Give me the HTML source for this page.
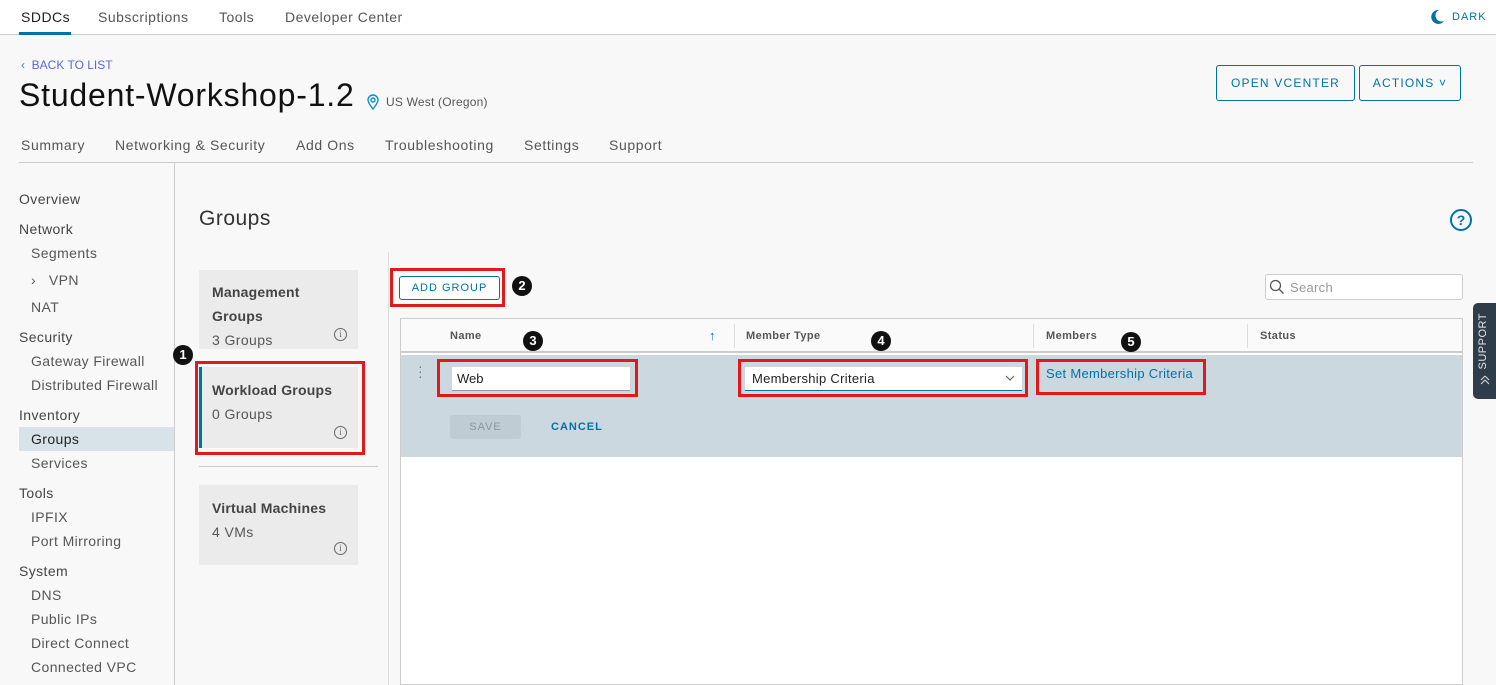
<!DOCTYPE html>
<html><head><meta charset="utf-8"><style>
*{box-sizing:border-box;margin:0;padding:0}
body{width:1496px;height:685px;overflow:hidden;background:#f8f8f8;font-family:"Liberation Sans",sans-serif;color:#333;position:relative}
.a{position:absolute;white-space:nowrap}
.top{position:absolute;left:0;top:0;width:1496px;height:35px;background:#fff;border-bottom:1px solid #ccc}
.t{font-size:14px;color:#565656;top:9px;letter-spacing:.5px}
.nav{font-size:14px;color:#565656;top:137px;letter-spacing:.6px}
.side{font-size:14px;color:#444;letter-spacing:.4px}
.sub{font-size:14px;color:#565656;letter-spacing:.4px}
.card{position:absolute;left:199px;width:159px;background:#ebebeb}
.card b{position:absolute;left:13px;font-size:14px;color:#444;letter-spacing:.2px}
.card span{position:absolute;left:13px;font-size:14px;color:#565656;letter-spacing:.4px}
.info{position:absolute;width:13px;height:13px;border:1px solid #666;border-radius:50%;font-size:9px;text-align:center;line-height:11px;color:#666;font-family:"Liberation Serif",serif}
.red{position:absolute;border:3px solid #e0191b}
.num{position:absolute;width:20px;height:20px;border-radius:50%;background:#111;color:#fff;font-size:13px;font-weight:bold;text-align:center;line-height:20px}
.th{font-size:11px;font-weight:bold;color:#555;top:330px;letter-spacing:.4px}
.sep{position:absolute;top:324px;width:1px;height:24px;background:#ddd}
</style></head><body>
<div class="top"></div>
<div class="a t" style="left:21px;color:#222">SDDCs</div>
<div class="a" style="left:19px;top:32px;width:52px;height:3px;background:#0072a3"></div>
<div class="a t" style="left:98px">Subscriptions</div>
<div class="a t" style="left:219px">Tools</div>
<div class="a t" style="left:285px">Developer Center</div>
<svg class="a" style="left:1430px;top:9px" width="15" height="16" viewBox="0 0 15 16"><path d="M9 1a7 7 0 1 0 5 11A6 6 0 0 1 9 1z" fill="#0072a3"/></svg>
<div class="a" style="left:1452px;top:11px;font-size:11px;color:#0072a3;letter-spacing:1px">DARK</div>

<div class="a" style="left:21px;top:58px;font-size:12px;color:#5a6ad0">‹&nbsp; BACK TO LIST</div>
<div class="a" style="left:19px;top:77px;font-size:32px;color:#111;letter-spacing:.8px">Student-Workshop-1.2</div>
<svg class="a" style="left:366px;top:94px" width="14" height="16" viewBox="0 0 14 16"><path d="M7 15C3 10 2 8 2 6a5 5 0 0 1 10 0c0 2-1 4-5 9z" fill="none" stroke="#0a8fd0" stroke-width="1.4"/><circle cx="7" cy="6" r="2" fill="none" stroke="#0a8fd0" stroke-width="1.4"/></svg>
<div class="a" style="left:386px;top:95px;font-size:12px;color:#565656;letter-spacing:.2px">US West (Oregon)</div>
<div class="a" style="left:1216px;top:65px;width:139px;height:36px;border:1px solid #0072a3;border-radius:3px;color:#0072a3;font-size:12px;letter-spacing:1.2px;text-align:center;line-height:34px">OPEN VCENTER</div>
<div class="a" style="left:1359px;top:65px;width:102px;height:36px;border:1px solid #0072a3;border-radius:3px;color:#0072a3;font-size:12px;letter-spacing:1.2px;text-align:center;line-height:34px">ACTIONS ˅</div>

<div class="a nav" style="left:21px">Summary</div>
<div class="a nav" style="left:115px">Networking &amp; Security</div>
<div class="a nav" style="left:296px">Add Ons</div>
<div class="a nav" style="left:385px">Troubleshooting</div>
<div class="a nav" style="left:524px">Settings</div>
<div class="a nav" style="left:609px">Support</div>
<div class="a" style="left:19px;top:162px;width:1454px;height:1px;background:#ccc"></div>
<div class="a" style="left:174px;top:163px;width:1px;height:522px;background:#ccc"></div>

<div class="a side" style="left:19px;top:191px">Overview</div>
<div class="a side" style="left:19px;top:221px">Network</div>
<div class="a sub" style="left:31px;top:245px">Segments</div>
<div class="a sub" style="left:31px;top:272px">›&nbsp;&nbsp; VPN</div>
<div class="a sub" style="left:31px;top:299px">NAT</div>
<div class="a side" style="left:19px;top:329px">Security</div>
<div class="a sub" style="left:31px;top:353px">Gateway Firewall</div>
<div class="a sub" style="left:31px;top:377px">Distributed Firewall</div>
<div class="a side" style="left:19px;top:407px">Inventory</div>
<div class="a" style="left:19px;top:427px;width:155px;height:24px;background:#d8e3e9"></div>
<div class="a sub" style="left:31px;top:431px;color:#222">Groups</div>
<div class="a sub" style="left:31px;top:455px">Services</div>
<div class="a side" style="left:19px;top:485px">Tools</div>
<div class="a sub" style="left:31px;top:509px">IPFIX</div>
<div class="a sub" style="left:31px;top:533px">Port Mirroring</div>
<div class="a side" style="left:19px;top:563px">System</div>
<div class="a sub" style="left:31px;top:587px">DNS</div>
<div class="a sub" style="left:31px;top:611px">Public IPs</div>
<div class="a sub" style="left:31px;top:635px">Direct Connect</div>
<div class="a sub" style="left:31px;top:659px">Connected VPC</div>

<div class="a" style="left:199px;top:207px;font-size:21px;color:#333;letter-spacing:.5px">Groups</div>
<div class="a" style="left:1450px;top:209px;width:22px;height:22px;border:2px solid #0072a3;border-radius:50%;color:#0072a3;font-size:14px;text-align:center;line-height:18px;font-weight:bold">?</div>

<div class="card" style="top:270px;height:79px"><b style="top:10px;line-height:24px">Management<br>Groups</b><span style="top:62px">3 Groups</span><div class="info" style="left:135px;top:58px">i</div></div>
<div class="card" style="top:367px;height:81px;border-left:3px solid #0072a3"><b style="top:15px;left:10px">Workload Groups</b><span style="top:39px;left:10px">0 Groups</span><div class="info" style="left:132px;top:59px">i</div></div>
<div class="a" style="left:199px;top:466px;width:179px;height:1px;background:#ccc"></div>
<div class="card" style="top:485px;height:80px"><b style="top:15px">Virtual Machines</b><span style="top:39px">4 VMs</span><div class="info" style="left:135px;top:57px">i</div></div>
<div class="red" style="left:195px;top:361px;width:170px;height:94px"></div>
<div class="num" style="left:173px;top:345px">1</div>

<div class="a" style="left:388px;top:252px;width:1px;height:433px;background:#ddd"></div>
<div class="a" style="left:399px;top:276px;width:101px;height:24px;border:1px solid #0072a3;border-radius:3px;color:#0072a3;font-size:11px;letter-spacing:1px;text-align:center;line-height:22px;background:#fff">ADD GROUP</div>
<div class="red" style="left:390px;top:268px;width:115px;height:39px"></div>
<div class="num" style="left:512px;top:276px">2</div>

<div class="a" style="left:1265px;top:274px;width:198px;height:26px;border:1px solid #ccc;border-radius:3px;background:#fff"></div>
<svg class="a" style="left:1269px;top:279px" width="16" height="16" viewBox="0 0 16 16"><circle cx="6.5" cy="6.5" r="5" fill="none" stroke="#555" stroke-width="1.3"/><path d="M10 10l4.5 4.5" stroke="#555" stroke-width="1.3"/></svg>
<div class="a" style="left:1290px;top:280px;font-size:13px;color:#999;letter-spacing:.3px">Search</div>

<div class="a" style="left:400px;top:318px;width:1063px;height:367px;background:#fff;border:1px solid #ccc"></div>
<div class="a" style="left:401px;top:319px;width:1061px;height:34px;background:#fafafa;border-bottom:2px solid #ccc"></div>
<div class="a th" style="left:450px">Name</div>
<div class="a" style="left:709px;top:328px;color:#0072a3;font-size:13px">↑</div>
<div class="sep" style="left:734px"></div>
<div class="a th" style="left:746px">Member Type</div>
<div class="sep" style="left:1033px"></div>
<div class="a th" style="left:1046px">Members</div>
<div class="sep" style="left:1247px"></div>
<div class="a th" style="left:1260px">Status</div>

<div class="a" style="left:401px;top:355px;width:1061px;height:102px;background:#cbd8e0"></div>
<div class="a" style="left:418px;top:364px;color:#777;font-size:14px;line-height:5px">·<br>·<br>·</div>
<div class="a" style="left:452px;top:367px;width:178px;height:24px;background:#fff;border-bottom:1px solid #999"></div>
<div class="a" style="left:457px;top:371px;font-size:13px;color:#222">Web</div>
<div class="red" style="left:437px;top:359px;width:201px;height:38px"></div>
<div class="num" style="left:523px;top:331px">3</div>

<div class="a" style="left:745px;top:367px;width:277px;height:24px;background:#fff;border-bottom:1px solid #0072a3"></div>
<div class="a" style="left:752px;top:371px;font-size:13px;color:#222;letter-spacing:.3px">Membership Criteria</div>
<svg class="a" style="left:1005px;top:375px" width="10" height="7" viewBox="0 0 10 7"><path d="M1 1l4 4 4-4" fill="none" stroke="#666" stroke-width="1.2"/></svg>
<div class="red" style="left:738px;top:359px;width:290px;height:38px"></div>
<div class="num" style="left:871px;top:331px">4</div>

<div class="a" style="left:1046px;top:366px;font-size:13px;color:#0072a3;letter-spacing:.3px">Set Membership Criteria</div>
<div class="red" style="left:1036px;top:359px;width:170px;height:36px"></div>
<div class="num" style="left:1121px;top:332px">5</div>

<div class="a" style="left:450px;top:415px;width:71px;height:24px;background:#c0ccd3;border-radius:3px;color:#8a979e;font-size:11px;letter-spacing:1px;text-align:center;line-height:24px">SAVE</div>
<div class="a" style="left:551px;top:421px;font-size:11px;color:#0072a3;letter-spacing:1px;font-weight:bold">CANCEL</div>

<div class="a" style="left:1473px;top:303px;width:23px;height:96px;background:#2f3d4a;border-radius:5px 0 0 5px"></div>
<div class="a" style="left:1477px;top:313px;writing-mode:vertical-rl;transform:rotate(180deg);font-size:11px;color:#e0e6ea;letter-spacing:.5px">SUPPORT</div>
<svg class="a" style="left:1479px;top:373px" width="12" height="14" viewBox="0 0 12 14"><path d="M2 7l4-4M2 7l4 4M6 7l4-4M6 7l4 4" transform="rotate(90 6 7)" fill="none" stroke="#cfd7dc" stroke-width="1.1"/></svg>
</body></html>
